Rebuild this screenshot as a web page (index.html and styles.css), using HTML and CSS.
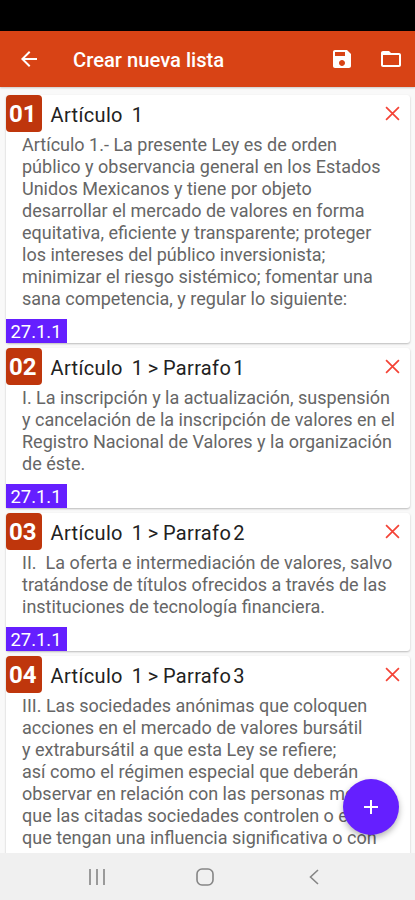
FILE: index.html
```
<!DOCTYPE html>
<html lang="es">
<head>
    <meta charset="UTF-8">
    <meta name="viewport" content="width=device-width, initial-scale=1.0">
    <title>Crear nueva lista</title>
    <link rel="stylesheet" href="styles.css">
</head>
<body>
    <div class="status-bar"></div>

    <header class="app-bar">
        <svg class="icon-back" viewBox="0 0 24 24"><path d="M20 11H7.83l5.59-5.59L12 4l-8 8 8 8 1.41-1.41L7.83 13H20v-2z"/></svg>
        <h1 class="app-title">Crear nueva lista</h1>
        <svg class="icon-save" viewBox="0 0 24 24"><path d="M17 3H5c-1.11 0-2 .9-2 2v14c0 1.1.89 2 2 2h14c1.1 0 2-.9 2-2V7l-4-4zm-5 16c-1.66 0-3-1.34-3-3s1.34-3 3-3 3 1.34 3 3-1.34 3-3 3zm3-10H5V5h10v4z"/></svg>
        <svg class="icon-folder" viewBox="0 0 24 24"><path d="M20 6h-8l-2-2H4c-1.1 0-1.99.9-1.99 2L2 18c0 1.1.9 2 2 2h16c1.1 0 2-.9 2-2V8c0-1.1-.9-2-2-2zm0 12H4V8h16v10z"/></svg>
    </header>

    <main class="list">
        <article class="card">
            <div class="card-header">
                <span class="number">01</span>
                <h2 class="card-title">Artículo&nbsp; 1</h2>
                <svg class="icon-close" viewBox="0 0 14 14"><path d="M1 1l12 12M13 1L1 13"/></svg>
            </div>
            <p class="card-text">Artículo 1.- La presente Ley es de orden<br>público y observancia general en los Estados<br>Unidos Mexicanos y tiene por objeto<br>desarrollar el mercado de valores en forma<br>equitativa, eficiente y transparente; proteger<br>los intereses del público inversionista;<br>minimizar el riesgo sistémico; fomentar una<br>sana competencia, y regular lo siguiente:</p>
            <span class="tag">27.1.1</span>
        </article>

        <article class="card">
            <div class="card-header">
                <span class="number">02</span>
                <h2 class="card-title">Artículo&nbsp; 1 &gt; Parrafo<span class="thin"></span>1</h2>
                <svg class="icon-close" viewBox="0 0 14 14"><path d="M1 1l12 12M13 1L1 13"/></svg>
            </div>
            <p class="card-text">I. La inscripción y la actualización, suspensión<br>y cancelación de la inscripción de valores en el<br>Registro Nacional de Valores y la organización<br>de éste.</p>
            <span class="tag">27.1.1</span>
        </article>

        <article class="card">
            <div class="card-header">
                <span class="number">03</span>
                <h2 class="card-title">Artículo&nbsp; 1 &gt; Parrafo<span class="thin"></span>2</h2>
                <svg class="icon-close" viewBox="0 0 14 14"><path d="M1 1l12 12M13 1L1 13"/></svg>
            </div>
            <p class="card-text">II.&nbsp; La oferta e intermediación de valores, salvo<br>tratándose de títulos ofrecidos a través de las<br>instituciones de tecnología financiera.</p>
            <span class="tag">27.1.1</span>
        </article>

        <article class="card">
            <div class="card-header">
                <span class="number">04</span>
                <h2 class="card-title">Artículo&nbsp; 1 &gt; Parrafo<span class="thin"></span>3</h2>
                <svg class="icon-close" viewBox="0 0 14 14"><path d="M1 1l12 12M13 1L1 13"/></svg>
            </div>
            <p class="card-text">III. Las sociedades anónimas que coloquen<br>acciones en el mercado de valores bursátil<br>y extrabursátil a que esta Ley se refiere;<br>así como el régimen especial que deberán<br>observar en relación con las personas mo<br>que las citadas sociedades controlen o en<br>que tengan una influencia significativa o con</p>
        </article>
    </main>

    <button class="fab" aria-label="Agregar">
        <svg viewBox="0 0 14 14"><path d="M7 0v14M0 7h14"/></svg>
    </button>

    <nav class="nav-bar">
        <svg class="nav-recent" viewBox="0 0 16 16"><path d="M1 0v16M8 0v16M15 0v16"/></svg>
        <svg class="nav-home" viewBox="0 0 18 18"><rect x="1" y="1" width="16" height="16" rx="5"/></svg>
        <svg class="nav-back" viewBox="0 0 10 16"><path d="M9 1L1.500 8L9 15"/></svg>
    </nav>
</body>
</html>
```
FILE: styles.css
```
* {
    margin: 0;
    padding: 0;
    box-sizing: border-box;
}

body {
    display: flex;
    flex-direction: column;
    height: 900px;
    background: #f9f9f9;
    font-family: Roboto, sans-serif;
    overflow: hidden;
}

.status-bar {
    flex: none;
    height: 31px;
    background: #000;
}

.app-bar {
    flex: none;
    display: flex;
    align-items: center;
    height: 56px;
    padding: 0 12px 0 17px;
    background: #d84315;
    color: #fff;
    box-shadow: 0 1px 2px rgba(0,0,0,0.2);
}

.app-bar svg {
    width: 24px;
    height: 24px;
    fill: #fff;
}

.app-title {
    flex: 1;
    margin-left: 32px;
    font-size: 20.2px;
    font-weight: 500;
    line-height: 24px;
    padding-top: 2px;
}

.icon-folder {
    margin-left: 25px;
}

.list {
    flex: 1;
    min-height: 0;
    display: flex;
    flex-direction: column;
    gap: 5px;
    padding: 8px 5px 0 5.5px;
    overflow: hidden;
}

.card {
    flex: none;
    display: flex;
    flex-direction: column;
    align-items: flex-start;
    background: #fff;
    border-radius: 3px;
    box-shadow: 0 1px 2px rgba(0,0,0,0.25);
}

.card:last-child {
    padding-bottom: 20px;
}

.card-header {
    display: flex;
    align-items: center;
    width: 100%;
    height: 36.5px;
    padding-right: 10px;
}

.number {
    width: 36.5px;
    height: 36.5px;
    padding-right: 2px;
    border-radius: 4px;
    background: #bf360c;
    color: #fff;
    font-size: 24px;
    font-weight: 700;
    line-height: 39px;
    text-align: center;
}

.card-title {
    flex: 1;
    margin-left: 8.5px;
    padding-top: 3px;
    color: #212121;
    font-size: 20px;
    font-weight: 400;
    line-height: 24px;
    letter-spacing: 0.35px;
    word-spacing: -0.9px;
    white-space: nowrap;
}

.thin {
    display: inline-block;
    width: 2px;
}

.icon-close {
    width: 15px;
    height: 15px;
    fill: none;
    stroke: #f44336;
    stroke-width: 1.6;
}

.card-text {
    margin: 2.5px 0 8.5px 16.5px;
    color: #666;
    font-size: 18px;
    line-height: 22px;
    white-space: nowrap;
}

.tag {
    width: 61px;
    height: 24.5px;
    background: #651fff;
    color: #fff;
    font-size: 18.4px;
    line-height: 26px;
    text-align: center;
}

.fab {
    position: fixed;
    top: 779px;
    left: 343px;
    display: flex;
    align-items: center;
    justify-content: center;
    width: 56px;
    height: 56px;
    border: none;
    border-radius: 50%;
    background: #651fff;
    box-shadow: 0 3px 6px rgba(0,0,0,0.3);
}

.fab svg {
    width: 14px;
    height: 14px;
    stroke: #fff;
    stroke-width: 2;
}

.nav-bar {
    flex: none;
    display: flex;
    align-items: center;
    height: 47px;
    padding-left: 89px;
    background: #f0f0f0;
}

.nav-bar svg {
    fill: none;
    stroke: #858585;
    stroke-width: 1.6;
}

.nav-recent {
    width: 16px;
    height: 16px;
}

.nav-home {
    width: 18px;
    height: 18px;
    margin-left: 91px;
}

.nav-back {
    width: 10px;
    height: 16px;
    margin-left: 95px;
}
```
